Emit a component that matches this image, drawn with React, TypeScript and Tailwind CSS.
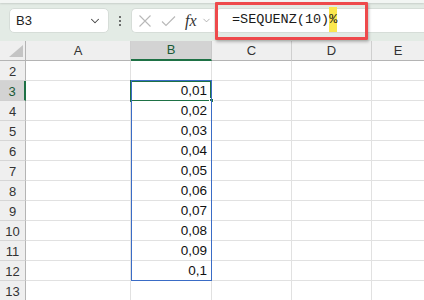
import { ChevronDown } from "lucide-react";

const rows = [2, 3, 4, 5, 6, 7, 8, 9, 10, 11, 12, 13];
const values: Record<number, string> = {
  3: "0,01",
  4: "0,02",
  5: "0,03",
  6: "0,04",
  7: "0,05",
  8: "0,06",
  9: "0,07",
  10: "0,08",
  11: "0,09",
  12: "0,1",
};

const sans = "font-['Liberation_Sans',Arial,sans-serif]";

function Toolbar() {
  return (
    <div className="relative h-[41px] bg-[#e3ebe5]">
      <div className="h-[3px] bg-[#f2f5f3] shadow-[0_1px_2px_rgba(0,0,0,0.12)]" />
      <div className="flex items-center pt-[5px]">
        <div className="ml-[9px] flex h-[25px] w-[100px] items-center justify-between rounded-[5px] border border-[#d6ddd8] bg-white pl-[6px] pr-[6px]">
          <span className={`${sans} text-[13px] text-[#222]`}>B3</span>
          <ChevronDown size={14} strokeWidth={1.8} className="text-[#444]" />
        </div>
        <div className="ml-[9px] flex w-[4px] flex-col items-center gap-[2px]">
          <span className="h-[2px] w-[2px] rounded-full bg-[#444]" />
          <span className="h-[2px] w-[2px] rounded-full bg-[#444]" />
          <span className="h-[2px] w-[2px] rounded-full bg-[#444]" />
        </div>
        <div className="ml-[9px] flex h-[25px] w-[83px] items-center rounded-l-[5px] border border-r-0 border-[#d6ddd8] bg-white pl-[6px]">
          <svg width="14" height="14" viewBox="0 0 14 14" className="text-[#b8b8b8]">
            <path d="M1.5 1.5 L12.5 12.5 M12.5 1.5 L1.5 12.5" stroke="currentColor" strokeWidth="1.1" fill="none" />
          </svg>
          <svg width="15" height="14" viewBox="0 0 15 14" className="ml-[9px] text-[#b8b8b8]">
            <path d="M1 7.5 L5 11.5 L14 2.5" stroke="currentColor" strokeWidth="1.1" fill="none" />
          </svg>
          <span className="ml-[9px] font-['Liberation_Serif',serif] text-[16px] italic leading-none text-[#333]">
            fx
          </span>
          <ChevronDown size={11} strokeWidth={1.6} className="ml-[4px] text-[#999]" />
        </div>
        <div className="ml-[2px] flex h-[25px] flex-1 items-center rounded-l-[5px] border border-r-0 border-[#d6ddd8] bg-white pl-[15px]">
          <span className="font-['Liberation_Mono',monospace] text-[13.5px] text-[#1a1a1a]">
            =SEQUENZ(10)
            <span className="bg-[#fbe84f] py-[5px]">%</span>
          </span>
        </div>
      </div>
      <div className="absolute left-[215px] top-[2px] h-[38px] w-[153px] rounded-[1px] border-[3px] border-[#ee4a4c] shadow-[1px_2px_3px_rgba(0,0,0,0.25)]" />
    </div>
  );
}

function Header() {
  const cols = [
    { name: "A", w: "w-[105px]" },
    { name: "B", w: "w-[81px]" },
    { name: "C", w: "w-[80px]" },
    { name: "D", w: "w-[80px]" },
  ];
  return (
    <div className={`flex h-[20px] ${sans} text-[13px]`}>
      <div className="relative h-[20px] w-[26px] border-b border-r border-[#b4b4b4] bg-[#efefef]">
        <svg width="14" height="12" viewBox="0 0 14 12" className="absolute bottom-[3px] right-[2px]">
          <path d="M14 0 L14 12 L0 12 Z" fill="#c4c4c4" />
        </svg>
      </div>
      {cols.map((c) =>
        c.name === "B" ? (
          <div
            key={c.name}
            className={`flex h-[20px] ${c.w} items-center justify-center border-b-2 border-r border-b-[#1e7145] border-r-[#c8c8c8] bg-[#d3d3d3] text-[#1a5a36]`}
          >
            B
          </div>
        ) : (
          <div
            key={c.name}
            className={`flex h-[20px] ${c.w} items-center justify-center border-b border-r border-b-[#b4b4b4] border-r-[#cfcfcf] bg-[#efefef] text-[#333]`}
          >
            {c.name}
          </div>
        )
      )}
      <div className="flex h-[20px] flex-1 items-center justify-center border-b border-[#b4b4b4] bg-[#efefef] text-[#333]">
        E
      </div>
    </div>
  );
}

function Row({ n }: { n: number }) {
  const selected = n === 3;
  return (
    <div className={`flex h-[20px] ${sans} text-[13px]`}>
      <div
        className={
          selected
            ? "flex h-[20px] w-[26px] items-center justify-center border-b border-r-2 border-b-[#d0d0d0] border-r-[#1e7145] bg-[#d3d3d3] pt-[2px] text-[#1a5a36]"
            : "flex h-[20px] w-[26px] items-center justify-center border-b border-r border-b-[#d6d6d6] border-r-[#b4b4b4] bg-[#efefef] pt-[2px] text-[#333]"
        }
      >
        {n}
      </div>
      <div className="h-[20px] w-[105px] border-b border-r border-[#e1e1e1] bg-white" />
      <div className="relative flex h-[20px] w-[81px] items-center justify-end border-b border-r border-[#e1e1e1] bg-white pr-[4px] pt-[2px] text-[13.5px] text-[#111]">
        {values[n] ?? ""}
        {selected && (
          <>
            <div className="absolute -left-[1px] -top-[1px] h-[22px] w-[82px] border-2 border-[#1e7145]" />
            <div className="absolute -bottom-[3px] -right-[3px] h-[5px] w-[5px] border border-white bg-[#1e7145]" />
          </>
        )}
      </div>
      <div className="h-[20px] w-[80px] border-b border-r border-[#e1e1e1] bg-white" />
      <div className="h-[20px] w-[80px] border-b border-r border-[#e1e1e1] bg-white" />
      <div className="h-[20px] flex-1 border-b border-[#e1e1e1] bg-white" />
    </div>
  );
}

export default function App() {
  return (
    <div className="h-[300px] w-[424px] overflow-hidden bg-white">
      <Toolbar />
      <Header />
      <div className="relative">
        {rows.map((n) => (
          <Row key={n} n={n} />
        ))}
        <div className="pointer-events-none absolute left-[131px] top-[19px] h-[201px] w-[81px] border border-[#3a6cc6]" />
      </div>
    </div>
  );
}
